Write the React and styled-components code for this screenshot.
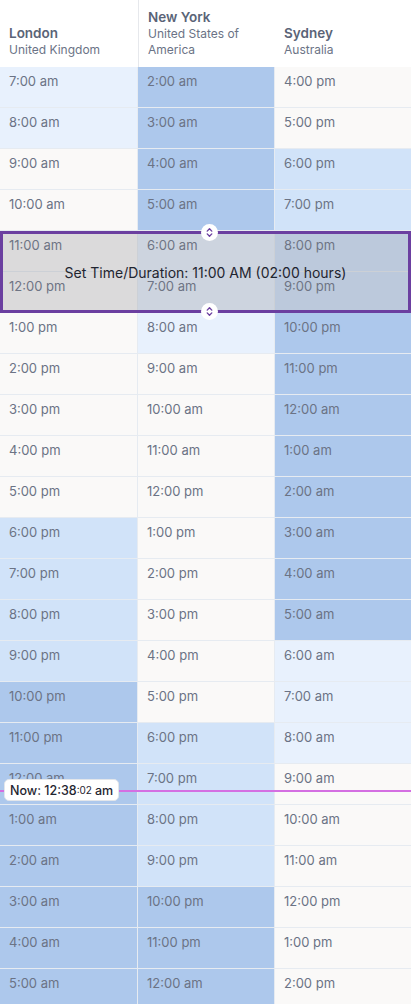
import React from "react";
import styled, { createGlobalStyle } from "styled-components";

const Global = createGlobalStyle`
  html, body { margin: 0; padding: 0; background: #ffffff; }
  body { font-family: Inter, "Noto Sans", sans-serif; -webkit-font-smoothing: antialiased; }
`;

const ROW = 41;

const COLORS = {
  night: "#adc8ec",
  dusk: "#d1e3f9",
  dawn: "#e8f1fd",
  day: "#faf9f8",
};

function kind(h) {
  if (h >= 6 && h <= 8) return "dawn";
  if (h >= 9 && h <= 17) return "day";
  if (h >= 18 && h <= 21) return "dusk";
  return "night";
}

function label(h) {
  const ap = h < 12 ? "am" : "pm";
  const hh = h % 12 === 0 ? 12 : h % 12;
  return `${hh}:00 ${ap}`;
}

const zones = [
  { city: "London", country: "United Kingdom", start: 7 },
  { city: "New York", country: "United States of America", start: 2 },
  { city: "Sydney", country: "Australia", start: 16 },
];

const Page = styled.div`
  width: 411px;
  overflow: hidden;
`;

const Header = styled.div`
  display: grid;
  grid-template-columns: 138px 137px 136px;
  height: 67px;
  background: #ffffff;
`;

const HeadCell = styled.div`
  display: flex;
  flex-direction: column;
  justify-content: flex-end;
  padding: 0 9px 9px 9px;
  border-left: ${(p) => (p.$divider ? "1px solid #e6e8ec" : "none")};
`;

const City = styled.div`
  font-size: 13.5px;
  font-weight: 600;
  color: #5a6477;
  line-height: 17px;
`;

const Country = styled.div`
  font-size: 12px;
  color: #6b7386;
  line-height: 16px;
`;

const Body = styled.div`
  position: relative;
  display: grid;
  grid-template-columns: 138px 137px 136px;
`;

const Column = styled.div`
  display: flex;
  flex-direction: column;
`;

const Cell = styled.div`
  height: ${ROW}px;
  box-sizing: border-box;
  padding: 6px 9px 0 9px;
  font-size: 13px;
  line-height: 16px;
  color: #6b7385;
  background: ${(p) => COLORS[p.$kind]};
  border-bottom: 1px solid #e6ebf1;
  border-right: ${(p) => (p.$last ? "none" : "1px solid #e6ebf1")};
`;

const Selection = styled.div`
  position: absolute;
  left: 0;
  right: 0;
  top: ${4 * ROW}px;
  height: ${2 * ROW}px;
  box-sizing: border-box;
  border: 3px solid #6b3fa0;
  background: rgba(120, 120, 128, 0.24);
  display: flex;
  align-items: center;
  justify-content: center;
`;

const SelLabel = styled.div`
  font-size: 14px;
  color: #1f2530;
`;

const Handle = styled.div`
  position: absolute;
  left: 198px;
  ${(p) => (p.$bottom ? "bottom: -10px;" : "top: -10px;")}
  width: 17px;
  height: 17px;
  border-radius: 50%;
  background: #ffffff;
  display: flex;
  align-items: center;
  justify-content: center;
`;

const NowLine = styled.div`
  position: absolute;
  left: 0;
  right: 0;
  top: 723px;
  height: 2px;
  background: #d46fe2;
`;

const NowBadge = styled.div`
  position: absolute;
  left: 4px;
  top: -11px;
  height: 22px;
  box-sizing: border-box;
  padding: 0 5px;
  display: flex;
  align-items: center;
  background: #ffffff;
  border: 1px solid #e3e6ea;
  border-radius: 5px;
  font-size: 12.5px;
  font-weight: 500;
  color: #1f2530;
  white-space: nowrap;
`;

const Sec = styled.span`
  font-size: 10px;
  font-weight: 400;
  margin-right: 3px;
`;

const UpDown = () => (
  <svg width="11" height="11" viewBox="0 0 24 24" fill="none" stroke="#6b3fa0" strokeWidth="3" strokeLinecap="round" strokeLinejoin="round">
    <path d="m7 15 5 5 5-5" />
    <path d="m7 9 5-5 5 5" />
  </svg>
);

export default function App() {
  return (
    <Page>
      <Global />
      <Header>
        {zones.map((z, i) => (
          <HeadCell key={z.city} $divider={i === 1}>
            <City>{z.city}</City>
            <Country>{z.country}</Country>
          </HeadCell>
        ))}
      </Header>
      <Body>
        {zones.map((z, ci) => (
          <Column key={z.city}>
            {Array.from({ length: 23 }, (_, r) => {
              const h = (z.start + r) % 24;
              return (
                <Cell key={r} $kind={kind(h)} $last={ci === 2}>
                  {label(h)}
                </Cell>
              );
            })}
          </Column>
        ))}
        <Selection>
          <Handle><UpDown /></Handle>
          <SelLabel>Set Time/Duration: 11:00 AM (02:00 hours)</SelLabel>
          <Handle $bottom><UpDown /></Handle>
        </Selection>
        <NowLine>
          <NowBadge>
            Now: 12:38<Sec>:02</Sec>am
          </NowBadge>
        </NowLine>
      </Body>
    </Page>
  );
}
